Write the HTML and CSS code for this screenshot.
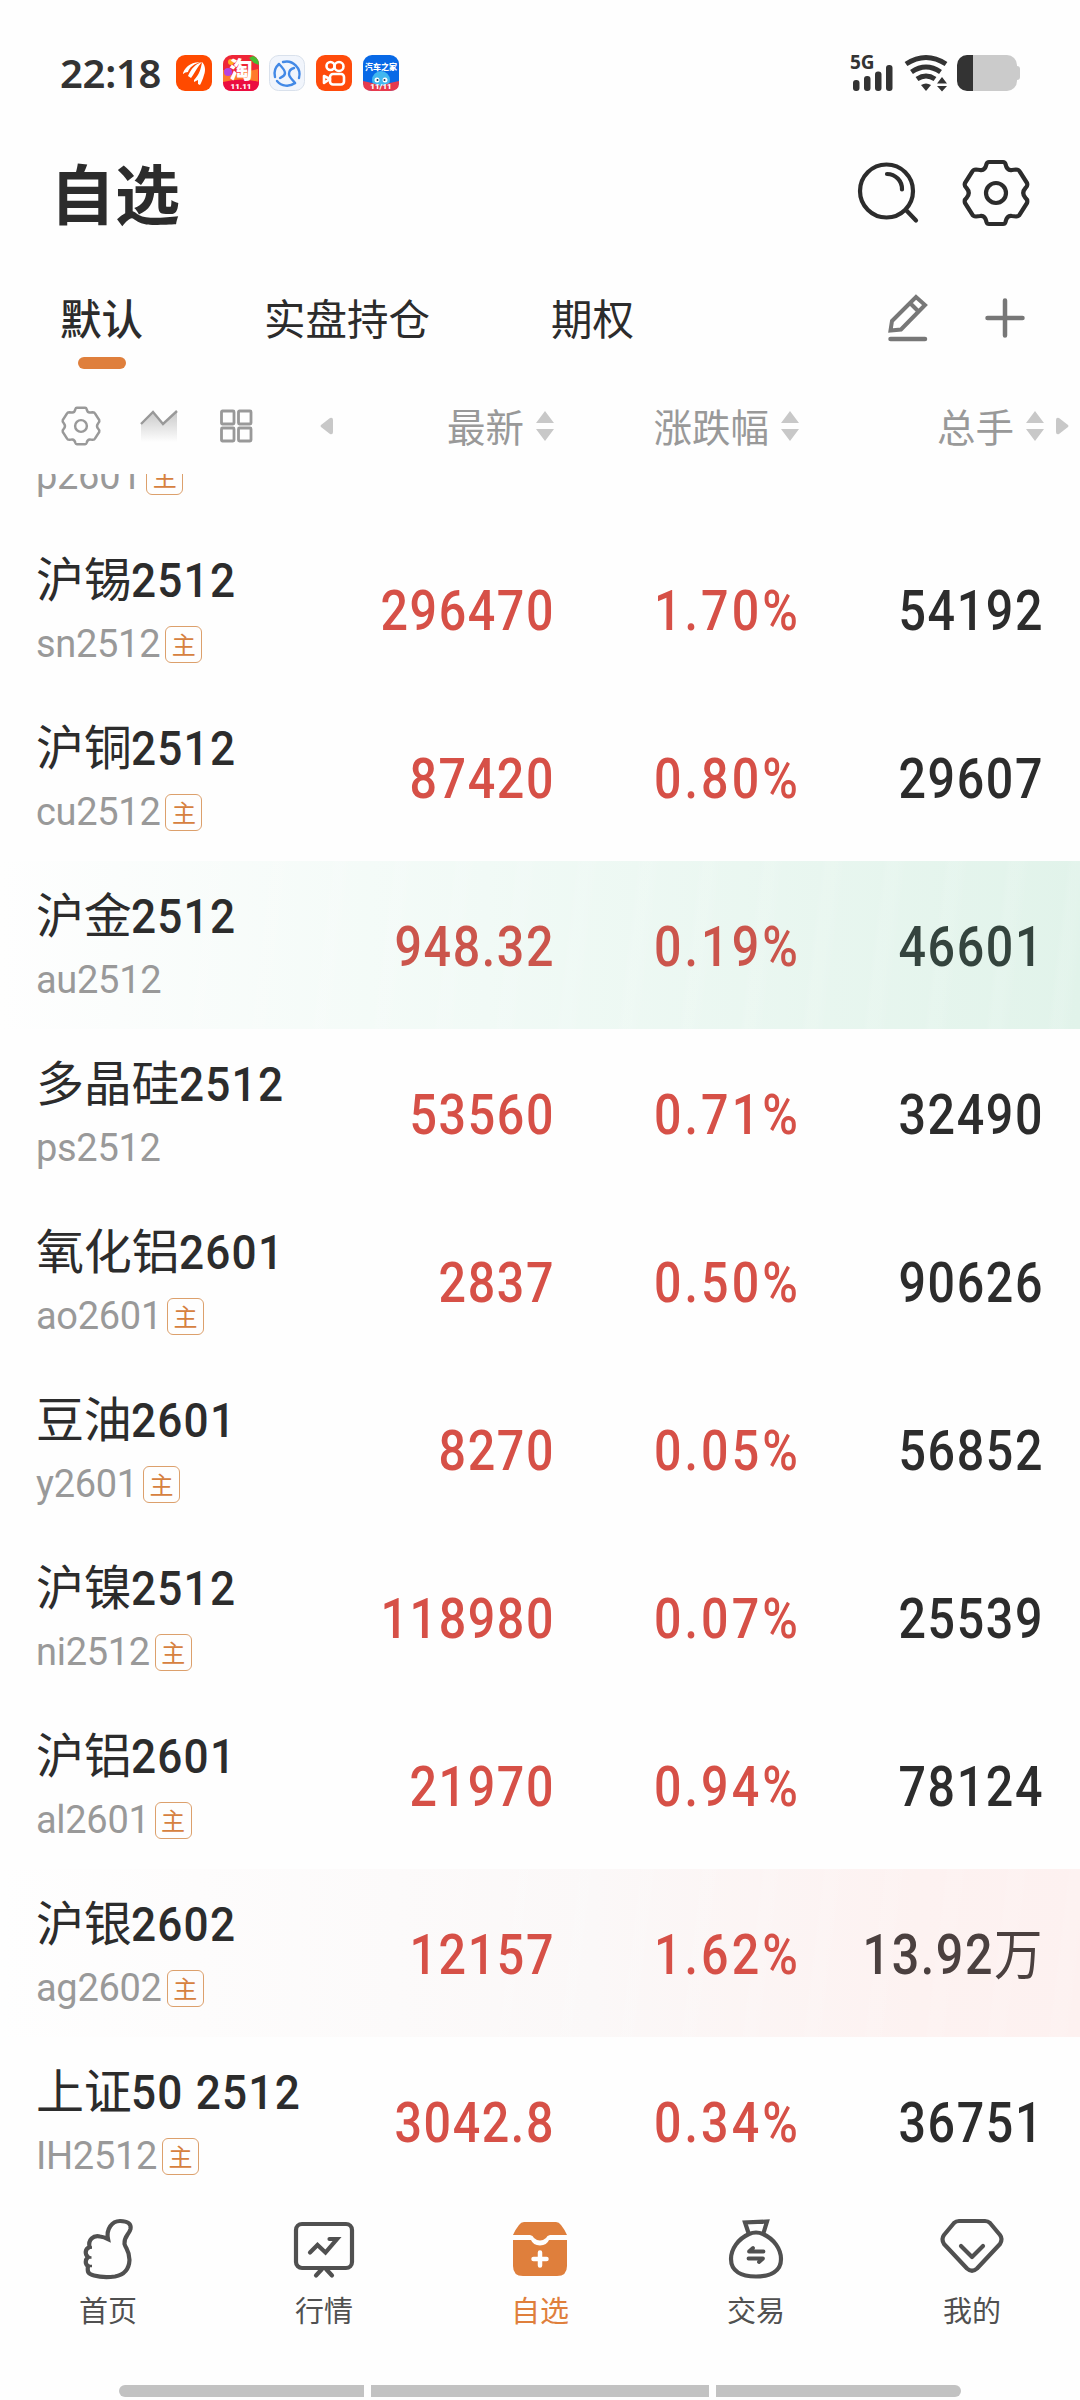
FILE: index.html
```html
<!doctype html>
<html lang="zh-CN">
  <head>
    <meta charset="UTF-8" />
    <meta name="viewport" content="width=device-width, initial-scale=1.0" />
    <title>自选</title>
    <link rel="stylesheet" href="styles.css">
  </head>
  <body>
    <div class="status-bar">
      <span class="time">22:18</span>
      <div class="apps">
        <svg width="36" height="36" viewBox="0 0 36 36">
          <rect width="36" height="36" rx="9" fill="#ff4a00" />
          <path d="M7 18C10 10 17 7 26 7C18 8 13 13 12 17Q9 17 7 19Z" fill="#fff" />
          <path d="M12 21C15 14 19 9 26 7C21 12 19 18 15 23Z" fill="#fff" />
          <path d="M18 25C23 20 25 14 26 7C29 10 30 15 28 20C27 24 25 28 24 30L22 29V25L18 27Z" fill="#fff" />
        </svg>
        <svg width="36" height="36" viewBox="0 0 36 36">
          <rect width="36" height="36" rx="9" fill="#ef2637" />
          <path d="M0 15C3 14 3 21 8 20L35 14V27L0 27Z" fill="#ff792a" />
          <circle cx="5" cy="17" r="4" fill="#b642df" />
          <path d="M26 3L30 1Q36 3 36 10L31 8Z" fill="#47bd32" />
          <circle cx="8" cy="7" r="3" fill="#ffad20" />
          <path d="M0 27Q18 22 36 27Q36 36 27 36H9Q0 36 0 27Z" fill="#eb0d40" />
          <text x="18" y="23" text-anchor="middle" class="tao">淘</text>
          <text x="18" y="34" text-anchor="middle" class="sale">11.11</text>
        </svg>
        <svg width="36" height="36" viewBox="0 0 36 36" fill="none" stroke="#4389e6" stroke-width="2.4" stroke-linecap="round">
          <rect x=".5" y=".5" width="35" height="35" rx="9" fill="#f1f5fc" stroke="#d9e1ec" stroke-width="1" />
          <path d="M14 7A13 13 0 0 1 30 23M26 28A13 13 0 0 1 8 26M6 22A13 13 0 0 1 10 9" />
          <path d="M10 9C13 12 16 15 16 18S13 22 11 23M25 13C21 14 20 16 20 19S23 24 26 28" />
        </svg>
        <svg width="36" height="36" viewBox="0 0 36 36" fill="none" stroke="#fff" stroke-width="2.6">
          <rect width="36" height="36" rx="9" fill="#ff4b0b" stroke="none" />
          <circle cx="14.5" cy="11" r="4" />
          <circle cx="23" cy="11.5" r="4.5" />
          <rect x="14" y="19" width="14" height="10.5" rx="3" />
          <path d="M14 24L8 21V28Z" stroke-linejoin="round" />
        </svg>
        <svg width="36" height="36" viewBox="0 0 36 36">
          <rect width="36" height="36" rx="9" fill="#0869e6" />
          <circle cx="18" cy="25" r="9" fill="#42b7ef" />
          <path d="M0 26L9 28L18 31L27 28L36 26V28Q36 36 27 36H9Q0 36 0 28Z" fill="#e73a4d" />
          <circle cx="14" cy="25" r="2.5" fill="#fff" />
          <circle cx="22" cy="25" r="2.5" fill="#fff" />
          <circle cx="14.5" cy="25" r="1" fill="#135" />
          <circle cx="21.5" cy="25" r="1" fill="#135" />
          <text x="18" y="14.5" text-anchor="middle" class="auto">汽车之家</text>
          <text x="18" y="34" text-anchor="middle" class="sale">11/11</text>
        </svg>
      </div>
      <div class="signals">
        <svg width="44" height="38" viewBox="0 0 44 38" fill="#333">
          <text x="-1" y="14.5" class="net">5G</text>
          <rect x="2" y="26" width="6.5" height="11" rx="3" />
          <rect x="13" y="22" width="6.5" height="15" rx="3" />
          <rect x="24" y="17.5" width="6.5" height="19.5" rx="3" />
          <rect x="35" y="11" width="6.5" height="26" rx="3" />
        </svg>
        <svg width="46" height="38" viewBox="0 0 46 38" fill="none" stroke="#333" stroke-width="5">
          <path d="M3 10Q23 -3 43 10M8.500 18Q23 8 37.500 18M14 25Q23 19 32 25" />
          <path d="M18 31Q23 28 28 31L23 37Z" fill="#333" stroke="none" />
          <path d="M34 29.500L39 23L44 29.500ZM34 32H44L39 37.500Z" fill="#333" stroke="none" />
        </svg>
        <div class="battery"></div>
      </div>
    </div>

    <header class="header">
      <h1>自选</h1>
      <div class="header-icons">
        <svg width="66" height="66" viewBox="0 0 66 66" fill="none" stroke="#2c2c2c" stroke-width="4.2" stroke-linecap="round">
          <circle cx="31.5" cy="31" r="26.5" />
          <path d="M32 14A15 15 0 0 1 47 29.500M51 50L61 60.500" />
        </svg>
        <svg width="68" height="68" viewBox="0 0 68 68" fill="none" stroke="#2c2c2c" stroke-width="4.2">
          <use href="#gear" />
        </svg>
      </div>
    </header>

    <nav class="tabs">
      <span class="tab active">默认</span>
      <span class="tab">实盘持仓</span>
      <span class="tab">期权</span>
      <div class="tab-icons">
        <svg width="42" height="50" viewBox="0 0 42 50" fill="none" stroke="#777" stroke-width="4" stroke-linecap="round">
          <path d="M5 28L29 4L38 12L14 36.500L3.500 37.500ZM23 10L31 18" />
          <path d="M3.500 46H38" stroke-width="4.5" />
        </svg>
        <svg width="42" height="42" viewBox="0 0 42 42" fill="none" stroke="#777" stroke-width="4.5" stroke-linecap="round">
          <path d="M3.500 21H38.500M21 3.500V38.500" />
        </svg>
      </div>
    </nav>

    <div class="columns">
      <div class="tools">
        <svg width="40" height="40" viewBox="0 0 68 68" fill="none" stroke="#999" stroke-width="4.2">
          <g id="gear">
            <path d="M27 3H41Q43 3 43.500 5Q45 12 50 11L54 10.500Q57 10.500 58 13L65 24Q66 27 63.500 29Q59 34 63.500 39Q66 41 65 44L58 55Q57 57.500 54 57.500L50 57Q45 56 43.500 63Q43 65 41 65H27Q25 65 24.500 63Q23 56 18 57L14 57.500Q11 57.500 10 55L3 44Q2 41 4.500 39Q9 34 4.500 29Q2 27 3 24L10 13Q11 10.500 14 10.500L18 11Q23 12 24.500 5Q25 3 27 3Z" />
            <circle cx="34" cy="34" r="10" />
          </g>
        </svg>
        <svg class="trend" width="38" height="34" viewBox="0 0 38 34">
          <defs>
            <linearGradient id="fade" x1="0" y1="0" x2="0" y2="1">
              <stop offset="0" stop-color="#c8c8c8" />
              <stop offset="1" stop-color="#fefefe" />
            </linearGradient>
          </defs>
          <path d="M1 15L13 3L23 15L37 2V33H1Z" fill="url(#fade)" />
          <path d="M1 15L13 3L23 15L37 2" fill="none" stroke="#999" stroke-width="2.4" />
        </svg>
        <svg class="grid" width="32" height="34" viewBox="0 0 32 34" fill="none" stroke="#999" stroke-width="2.8">
          <rect x="1.5" y="2" width="12.5" height="13" rx="1" />
          <rect x="18.5" y="2" width="12.5" height="13" rx="1" />
          <rect x="1.5" y="19" width="12.5" height="13" rx="1" />
          <rect x="18.5" y="19" width="12.5" height="13" rx="1" />
        </svg>
        <svg class="prev" width="14" height="18" viewBox="0 0 14 18" fill="#c8c8c8">
          <path d="M1 8Q0 9 1 10L10 17Q13 18 13 15V3Q13 0 10 1Z" />
        </svg>
      </div>
      <div class="col price"><span>最新</span><svg class="sort" width="18" height="30" viewBox="0 0 18 30"><path d="M0 12L9 0L18 12ZM0 18H18L9 30Z" /></svg></div>
      <div class="col rate"><span>涨跌幅</span><svg class="sort" width="18" height="30" viewBox="0 0 18 30"><path d="M0 12L9 0L18 12ZM0 18H18L9 30Z" /></svg></div>
      <div class="col volume"><span>总手</span><svg class="sort" width="18" height="30" viewBox="0 0 18 30"><path d="M0 12L9 0L18 12ZM0 18H18L9 30Z" /></svg></div>
      <svg class="next" width="14" height="18" viewBox="0 0 14 18" fill="#c8c8c8">
        <path d="M13 8Q14 9 13 10L4 17Q1 18 1 15V3Q1 0 4 1Z" />
      </svg>
    </div>

    <main class="list">
      <div class="row first">
        <div class="name"><b></b><span class="code">p2601<i>主</i></span></div>
      </div>
      <div class="row">
        <div class="name"><b>沪锡<em>2512</em></b><span class="code">sn2512<i>主</i></span></div>
        <div class="num price">296470</div><div class="num rate">1.70%</div><div class="num volume">54192</div>
      </div>
      <div class="row">
        <div class="name"><b>沪铜<em>2512</em></b><span class="code">cu2512<i>主</i></span></div>
        <div class="num price">87420</div><div class="num rate">0.80%</div><div class="num volume">29607</div>
      </div>
      <div class="row green">
        <div class="name"><b>沪金<em>2512</em></b><span class="code">au2512</span></div>
        <div class="num price">948.32</div><div class="num rate">0.19%</div><div class="num volume">46601</div>
      </div>
      <div class="row">
        <div class="name"><b>多晶硅<em>2512</em></b><span class="code">ps2512</span></div>
        <div class="num price">53560</div><div class="num rate">0.71%</div><div class="num volume">32490</div>
      </div>
      <div class="row">
        <div class="name"><b>氧化铝<em>2601</em></b><span class="code">ao2601<i>主</i></span></div>
        <div class="num price">2837</div><div class="num rate">0.50%</div><div class="num volume">90626</div>
      </div>
      <div class="row">
        <div class="name"><b>豆油<em>2601</em></b><span class="code">y2601<i>主</i></span></div>
        <div class="num price">8270</div><div class="num rate">0.05%</div><div class="num volume">56852</div>
      </div>
      <div class="row">
        <div class="name"><b>沪镍<em>2512</em></b><span class="code">ni2512<i>主</i></span></div>
        <div class="num price">118980</div><div class="num rate">0.07%</div><div class="num volume">25539</div>
      </div>
      <div class="row">
        <div class="name"><b>沪铝<em>2601</em></b><span class="code">al2601<i>主</i></span></div>
        <div class="num price">21970</div><div class="num rate">0.94%</div><div class="num volume">78124</div>
      </div>
      <div class="row red">
        <div class="name"><b>沪银<em>2602</em></b><span class="code">ag2602<i>主</i></span></div>
        <div class="num price">12157</div><div class="num rate">1.62%</div><div class="num volume">13.92<u>万</u></div>
      </div>
      <div class="row">
        <div class="name"><b>上证<em>50 2512</em></b><span class="code">IH2512<i>主</i></span></div>
        <div class="num price">3042.8</div><div class="num rate">0.34%</div><div class="num volume">36751</div>
      </div>
    </main>

    <footer class="tabbar">
      <div class="item">
        <svg width="64" height="64" viewBox="0 0 64 64" fill="none" stroke="#505050" stroke-width="4.2">
          <path d="M32 22C30 12 36 4 44 4C52 4 55.500 7 54.500 12C53 18 48 19 48.500 27C50 32 53.500 34 53.500 43C53 54 47 58 39 59.500Q27 61 18 58.500C12 57 11 55 12 49C9 47 9 43 12 40C8.500 37 9 32 13.500 30C12 23 17 18 24 19.500Q28 20 32 22Z" />
          <path d="M12 30.500H16M11 40.500H15.500M12 49H16" stroke-width="2.5" />
        </svg>
        <span>首页</span>
      </div>
      <div class="item">
        <svg width="64" height="64" viewBox="0 0 64 64" fill="none" stroke="#505050" stroke-width="4.2" stroke-linecap="round">
          <rect x="4" y="7" width="56" height="44" rx="6" />
          <path d="M18 35.500L25.500 28L33.500 35.500L45 22H37.500M30 52L24 58.500M34 52L40 58.500" />
        </svg>
        <span>行情</span>
      </div>
      <div class="item current">
        <svg width="64" height="64" viewBox="0 0 64 64" fill="#df7f3c">
          <path d="M16 5H48Q51 5 53 8Q57 13 59 18H42Q39 18.500 38 21Q32 26 26 21Q25 18.500 22 18H5Q7 13 11 8Q13 5 16 5Z" />
          <path d="M5 23H23Q25 28 32 28.500Q39 28 41 23H59V49Q59 59 49 59H15Q5 59 5 49Z" />
          <path d="M32 35.500V48.500M25.500 42H38.500" stroke="#fff" stroke-width="4.5" stroke-linecap="round" />
        </svg>
        <span>自选</span>
      </div>
      <div class="item">
        <svg width="64" height="64" viewBox="0 0 64 64" fill="none" stroke="#505050" stroke-width="4.2">
          <path d="M24.500 16L21 5.500L43 4.500L39.500 16M25 17Q32 14 39 17C50 22 57 32 57 42C57 54 47 59.500 32 59.500S7 54 7 42C7 32 14 22 25 17Z" />
          <path d="M39.500 34.500H25L29 31M24.500 41.500H39L35 45" stroke-linecap="round" stroke-linejoin="round" stroke-width="3.8" />
        </svg>
        <span>交易</span>
      </div>
      <div class="item">
        <svg width="64" height="64" viewBox="0 0 64 64" fill="none" stroke="#505050" stroke-width="4.2" stroke-linejoin="round" stroke-linecap="round">
          <path d="M19 4H45Q48 4 50 6L60 18Q63 22 60 27L37 51.500Q32 56 27 51.500L4 27Q1 22 4 18L14 6Q16 4 19 4Z" />
          <path d="M21 29L32 40L43 29" />
        </svg>
        <span>我的</span>
      </div>
    </footer>
    <div class="handle"><span></span><span></span><span></span></div>
  </body>
</html>
```
FILE: styles.css
```css
body {
  margin: 0;
  width: 1080px;
  height: 2400px;
  display: flex;
  flex-direction: column;
  overflow: hidden;
  background-color: #fefefe;
  color: #2c2c2c;
  font-family: Roboto, "Noto Sans CJK SC", sans-serif;
}

svg {
  display: block;
  flex: none;
  overflow: visible;
}

.status-bar {
  height: 146px;
  box-sizing: border-box;
  padding: 0 60px 1px;
  display: flex;
  align-items: center;
}

.time {
  width: 116px;
  font-family: "Noto Sans", sans-serif;
  font-size: 40px;
  font-weight: 600;
  letter-spacing: -0.3px;
  color: #333;
}

.apps {
  display: flex;
  gap: 10.7px;
}

.tao {
  font-size: 23px;
  font-weight: 900;
  fill: #fff;
}

.sale {
  font-size: 8px;
  font-weight: 900;
  fill: #fff;
}

.auto {
  font-size: 8px;
  font-weight: 900;
  fill: #fff;
}

.net {
  font-family: "Noto Sans", sans-serif;
  font-size: 19px;
  font-weight: 700;
}

.signals {
  margin-left: auto;
  display: flex;
  align-items: center;
  gap: 8px;
}

.battery {
  position: relative;
  width: 60px;
  height: 36px;
  margin-right: 3px;
  border-radius: 10px;
  background: linear-gradient(90deg, #333 16px, #cbcbcb 16px);
}

.battery::after {
  content: "";
  position: absolute;
  right: -3px;
  top: 11px;
  width: 3px;
  height: 14px;
  border-radius: 0 3px 3px 0;
  background-color: #cbcbcb;
}

.header {
  height: 94px;
  padding: 0 50px;
  display: flex;
  align-items: center;
  justify-content: space-between;
}

.header h1 {
  margin: 0 0 5px;
  font-family: "Noto Sans CJK SC", sans-serif;
  font-size: 65px;
  line-height: 66px;
  font-weight: 700;
}

.header-icons {
  display: flex;
  align-items: center;
  gap: 41px;
}

.tabs {
  height: 140px;
  box-sizing: border-box;
  padding: 47px 54px 0 60px;
  display: flex;
  align-items: flex-start;
}

.tab {
  font-family: "Noto Sans CJK SC", sans-serif;
  font-size: 41.5px;
  line-height: 60px;
  margin-right: 121px;
}

.tab.active {
  font-weight: 500;
}

.tab.active::after {
  content: "";
  display: block;
  width: 48px;
  height: 12px;
  margin: 10px auto 0;
  border-radius: 6px;
  background-color: #df7f3c;
}

.tab-icons {
  margin: 6px 0 0 auto;
  display: flex;
  align-items: center;
  gap: 55px;
}

.columns {
  height: 94px;
  box-sizing: border-box;
  padding: 0 0 2px 61px;
  display: flex;
  align-items: center;
  color: #999;
  font-family: "Noto Sans CJK SC", sans-serif;
  font-size: 38.5px;
  line-height: 40px;
}

.tools {
  width: 273px;
  display: flex;
  align-items: center;
}

.trend {
  margin-left: 39px;
}

.grid {
  margin-left: 42px;
}

.prev {
  margin-left: 68px;
}

.col {
  display: flex;
  align-items: center;
  justify-content: flex-end;
  gap: 12px;
}

.col span {
  margin-bottom: 3px;
}

.columns .price {
  width: 220px;
}

.columns .rate,
.columns .volume {
  width: 245px;
}

.sort {
  fill: #c8c8c8;
}

.next {
  margin-left: 11px;
}

.list {
  height: 1716px;
  overflow: hidden;
}

.row {
  height: 168px;
  box-sizing: border-box;
  padding: 0 36px;
  display: flex;
  align-items: center;
}

.row.first {
  margin-top: -117px;
}

.green {
  background:
    repeating-linear-gradient(97deg, rgba(255, 255, 255, 0) 0 22px, rgba(255, 255, 255, 0.09) 28px 36px, rgba(255, 255, 255, 0) 47px 61px),
    linear-gradient(90deg, #fefefe, #f1faf6 45%, #e1f3ea);
}

.red {
  background:
    repeating-linear-gradient(97deg, rgba(255, 255, 255, 0) 0 22px, rgba(255, 255, 255, 0.09) 28px 36px, rgba(255, 255, 255, 0) 47px 61px),
    linear-gradient(90deg, #fefefe, #fbf8f8 55%, #fdf2f1 85%, #fdf1f0);
}

.name {
  width: 300px;
  height: 168px;
  white-space: nowrap;
}

.name b {
  display: block;
  height: 60px;
  padding-top: 26px;
  font-size: 48px;
  line-height: 60px;
  font-weight: 400;
  letter-spacing: -0.3px;
}

.name em {
  display: inline-block;
  font-style: normal;
  font-weight: 500;
  letter-spacing: 1.3px;
  transform: scaleX(0.92);
  transform-origin: left;
}

.code {
  display: flex;
  align-items: center;
  height: 40px;
  margin-top: 13px;
  font-size: 38px;
  line-height: 40px;
  letter-spacing: -0.3px;
  color: #999;
}

.code i {
  width: 35px;
  height: 35px;
  margin-left: 5px;
  border: 1.5px solid #dca06c;
  border-radius: 6px;
  font-family: "Noto Sans CJK SC", sans-serif;
  font-size: 24px;
  line-height: 33px;
  font-style: normal;
  text-align: center;
  letter-spacing: 0;
  color: #d6813f;
}

/* narrowed to get tall, evenly spaced figures */
.num {
  font-size: 55px;
  line-height: 64px;
  margin-top: 3px;
  font-weight: 500;
  letter-spacing: 1.8px;
  text-align: right;
  white-space: nowrap;
  transform: scaleX(0.88);
  transform-origin: right;
}

.num u {
  font-weight: 400;
  text-decoration: none;
  line-height: 1;
}

.num.price {
  width: 219px;
  color: #d65047;
}

.num.rate {
  width: 246px;
  letter-spacing: 3.5px;
  color: #d65047;
}

.num.volume {
  width: 243px;
}

.green .price,
.green .rate {
  color: #cb554c;
}

.green .volume {
  color: #34443e;
}

.red .volume {
  color: #4b403f;
}

.tabbar {
  height: 194px;
  display: flex;
}

.item {
  flex: 1;
  padding-top: 27px;
  display: flex;
  flex-direction: column;
  align-items: center;
  color: #505050;
  font-size: 29px;
}

.item span {
  margin-top: 10px;
  line-height: 42px;
}

.item.current {
  color: #df7f3c;
}

.handle {
  display: flex;
  gap: 7px;
  margin-top: 1px;
  padding-left: 119px;
}

.handle span {
  width: 245px;
  height: 12px;
  border-radius: 6px 0 0 6px;
  background-color: #c2c2c2;
}

.handle span:nth-child(2) {
  width: 338px;
  border-radius: 0;
}

.handle span:nth-child(3) {
  border-radius: 0 6px 6px 0;
}
```
